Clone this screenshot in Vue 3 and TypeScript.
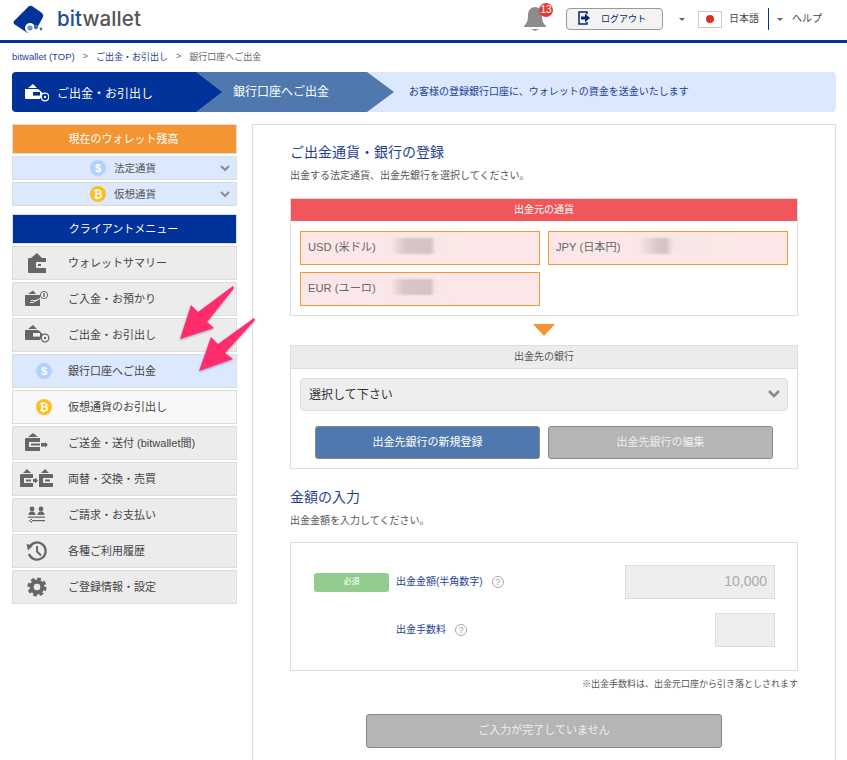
<template>
  <div class="page">
    <svg width="0" height="0" class="defs">
      <symbol id="wallet" viewBox="0 0 40 30">
        <path d="M13 10l6-5 5 5z" />
        <path d="M10 11a1 1 0 0 1 1-1h17v15H11a1 1 0 0 1-1-1z" />
        <rect x="18" y="14" width="10.500" height="6" class="hole" />
        <rect x="20" y="16" width="3" height="2" />
      </symbol>
      <symbol id="wallet-in" viewBox="0 0 40 30">
        <path d="M10 10l5-3.500 3 3.500z" />
        <path d="M7 11h15v3l-6 3 1 1 5-3v7H8a1 1 0 0 1-1-1z" />
        <path d="M13 16h6v1h-6zM12 18h4v1h-4z" class="hole-fill" />
        <circle cx="26" cy="11" r="3.600" fill="none" stroke="currentColor" stroke-width="1" />
        <path d="M25.300 9h1.400v4h-1.400z" />
      </symbol>
      <symbol id="wallet-out" viewBox="0 0 40 30">
        <path d="M10 9l5-4 4 4z" />
        <path d="M7 10h13v3h-6v5h8v2H8a1 1 0 0 1-1-1z" />
        <path d="M13 11.500 21 10.500l4 4-2 4.500h-9z" />
        <rect x="15" y="13" width="7" height="3.600" class="hole" />
        <circle cx="27" cy="18" r="3.800" class="hole" stroke="currentColor" stroke-width="1.300" />
        <circle cx="27" cy="18" r="1.200" />
      </symbol>
      <symbol id="wallet-send" viewBox="0 0 40 30">
        <path d="M10 9l5-4 5 4z" />
        <path d="M7 11a1 1 0 0 1 1-1h14v13H8a1 1 0 0 1-1-1z" />
        <rect x="11" y="14" width="12" height="5" class="hole" />
        <rect x="13" y="15.500" width="9" height="2" />
        <path d="M23 15h4v3.500h-4zM27 14l3 2.750-3 2.750z" />
      </symbol>
      <symbol id="wallet-swap" viewBox="0 0 40 30">
        <path d="M5 9l4-4 4 4zM23 9l4-4 4 4z" />
        <path d="M2 11a1 1 0 0 1 1-1h12v13H3a1 1 0 0 1-1-1zM21 10h13a1 1 0 0 1 1 1v11a1 1 0 0 1-1 1H21z" />
        <rect x="6" y="14" width="9" height="5" class="hole" />
        <rect x="25" y="14" width="10" height="5" class="hole" />
        <rect x="8" y="15.500" width="5" height="2" />
        <rect x="27" y="15.500" width="5" height="2" />
        <path d="M15 15h2v3h-2zM17 13.500l3 3-3 3z" />
      </symbol>
      <symbol id="people" viewBox="0 0 40 30">
        <circle cx="14" cy="9" r="2.400" />
        <circle cx="23" cy="9" r="2.400" />
        <path d="M10.500 15q0-3.500 3.500-3.500t3.500 3.500zM19.500 15q0-3.500 3.500-3.500t3.500 3.500z" />
        <path d="M10 16.500h17v1.300H10zM12 20h15v1.300H12zM14 18.500l-3.500 2.200 3.500 2.300z" />
      </symbol>
      <symbol id="history" viewBox="0 0 40 30">
        <path d="M11.500 11a8.600 8.600 0 1 1-.5 7" fill="none" stroke="currentColor" stroke-width="2.200" />
        <path d="M8.500 8l6.500 1.500-5 5z" />
        <path d="M19 10v5.500l4 4" fill="none" stroke="currentColor" stroke-width="1.900" />
      </symbol>
      <symbol id="gear" viewBox="0 0 40 30">
        <circle cx="19" cy="15" r="5.400" fill="none" stroke="currentColor" stroke-width="4.200" />
        <circle cx="19" cy="15" r="8.300" fill="none" stroke="currentColor" stroke-width="2.600" stroke-dasharray="3.800 2.717" />
      </symbol>
    </svg>

    <header class="top">
      <svg class="logo" width="32" height="30" viewBox="0 0 32 30">
        <path fill="#003399" d="M1 16 15 2q2-2 4-1l10 7q2 2 1 4l-6 11-8 4q-2 1-3 0L1 19q-1-2 0-3z" />
        <circle cx="17" cy="23" r="5" fill="#fff" />
        <circle cx="17" cy="23" r="2.600" fill="#6d95c6" />
        <circle cx="23" cy="22" r="2.200" fill="#3f70b0" />
        <circle cx="28" cy="24" r="1.400" fill="#3f70b0" />
      </svg>
      <div class="brand"><span>bit</span>wallet</div>

      <div class="bell">
        <svg width="24" height="25" viewBox="0 0 24 25">
          <path fill="#8c8c8c" d="M12 1a7 7 0 0 0-7 7c0 7-1 9-4 12v1h22v-1c-3-3-4-5-4-12a7 7 0 0 0-7-7z" />
          <path fill="#8c8c8c" d="M8 23h8l-4 2z" />
        </svg>
        <span class="bell-count">13</span>
      </div>
      <button class="logout">
        <svg width="12" height="14" viewBox="0 0 12 14">
          <path fill="none" stroke="#00287a" stroke-width="1.500" d="M9 3V1H1v12h8v-2" />
          <path fill="#00287a" d="M3 5.500h4V2.500L12 7 7 11.500V8.500H3z" />
        </svg>
        <span>ログアウト</span>
      </button>
      <i class="caret first"></i>
      <span class="flag"><b></b></span>
      <span class="lang">日本語</span>
      <span class="sep"></span>
      <i class="caret"></i>
      <span class="help">ヘルプ</span>
    </header>

    <nav class="crumbs">
      <a class="home">bitwallet (TOP)</a><em>&gt;</em><a>ご出金・お引出し</a><em>&gt;</em><span>銀行口座へご出金</span>
    </nav>

    <div class="steps">
      <div class="step one">
        <svg class="step-icon" width="26" height="20" viewBox="5 3 26 20"><use href="#wallet-out" width="40" height="30" /></svg>
        ご出金・お引出し
      </div>
      <div class="step two">銀行口座へご出金</div>
      <div class="step-note">お客様の登録銀行口座に、ウォレットの資金を送金いたします</div>
    </div>

    <div class="columns">
      <aside class="side">
        <div class="side-head orange">現在のウォレット残高</div>
        <div v-for="c in balances" :key="c.label" class="balance">
          <span class="coin" :class="c.kind">{{ c.mark }}</span>
          <span class="balance-label">{{ c.label }}</span>
          <svg class="chev" width="10" height="7" viewBox="0 0 10 7"><path d="M1 1l4 4 4-4" /></svg>
        </div>
        <div class="side-head navy">クライアントメニュー</div>
        <div v-for="m in menu" :key="m.label" class="item" :class="m.variant">
          <span class="item-icon">
            <span v-if="m.coin" class="coin" :class="m.coin">{{ m.coin === 'fiat' ? '$' : '₿' }}</span>
            <svg v-else width="40" height="30"><use :href="'#' + m.icon" /></svg>
          </span>
          <span class="item-label">{{ m.label }}</span>
        </div>
      </aside>

      <main class="main">
        <h2>ご出金通貨・銀行の登録</h2>
        <p class="lead">出金する法定通貨、出金先銀行を選択してください。</p>

        <section class="panel">
          <div class="panel-head red">出金元の通貨</div>
          <div class="cards">
            <div v-for="a in accounts" :key="a.label" class="card">
              <span class="card-label">{{ a.label }}</span>
              <span class="smudge" :style="{ width: a.blur + 'px', '--dark': a.dark + '%' }"></span>
            </div>
          </div>
        </section>

        <div class="tri"></div>

        <section class="panel">
          <div class="panel-head grey">出金先の銀行</div>
          <div class="select">
            選択して下さい
            <svg width="14" height="10" viewBox="0 0 14 10"><path d="M2 2l5 5 5-5" /></svg>
          </div>
          <div class="bank-btns">
            <button class="btn blue">出金先銀行の新規登録</button>
            <button class="btn off">出金先銀行の編集</button>
          </div>
        </section>

        <h2 class="second">金額の入力</h2>
        <p class="lead">出金金額を入力してください。</p>

        <section class="panel amount">
          <div class="row">
            <span class="must">必須</span>
            <label>出金金額(半角数字)</label>
            <span class="help-q">?</span>
            <input class="field wide" disabled value="10,000" />
          </div>
          <div class="row">
            <span class="must ghost"></span>
            <label>出金手数料</label>
            <span class="help-q">?</span>
            <input class="field narrow" disabled />
          </div>
        </section>
        <p class="note">※出金手数料は、出金元口座から引き落としされます</p>
        <button class="btn off submit">ご入力が完了していません</button>
      </main>
    </div>

    <svg class="arrows" width="80" height="95" viewBox="178 284 80 95">
      <g fill="#ff2d6b">
        <path d="M233 286 198 312 191 305 180 339 214 328 207 322 234 288z" />
        <path d="M254 318 218 344 211 337 199 371 233 359 225 353 255 320z" />
      </g>
    </svg>
  </div>
</template>

<script setup lang="ts">
interface MenuItem {
  label: string;
  icon?: string;
  coin?: string;
  variant?: string;
}

const balances = [
  { label: '法定通貨', kind: 'fiat', mark: '$' },
  { label: '仮想通貨', kind: 'crypto', mark: '₿' },
];

const menu: MenuItem[] = [
  { label: 'ウォレットサマリー', icon: 'wallet' },
  { label: 'ご入金・お預かり', icon: 'wallet-in' },
  { label: 'ご出金・お引出し', icon: 'wallet-out' },
  { label: '銀行口座へご出金', coin: 'fiat', variant: 'active' },
  { label: '仮想通貨のお引出し', coin: 'crypto', variant: 'sub' },
  { label: 'ご送金・送付 (bitwallet間)', icon: 'wallet-send' },
  { label: '両替・交換・売買', icon: 'wallet-swap' },
  { label: 'ご請求・お支払い', icon: 'people' },
  { label: '各種ご利用履歴', icon: 'history' },
  { label: 'ご登録情報・設定', icon: 'gear' },
];

const accounts = [
  { label: 'USD (米ドル)', blur: 66, dark: 58 },
  { label: 'JPY (日本円)', blur: 92, dark: 28 },
  { label: 'EUR (ユーロ)', blur: 58, dark: 66 },
];
</script>

<style>
html, body {
  margin: 0;
  background: #fff;
  overflow: hidden;
}

.hole {
  fill: var(--hole, #ececec);
}

.hole-fill {
  fill: var(--hole, #ececec);
}
</style>

<style scoped>
.page {
  position: relative;
  height: 760px;
  overflow: hidden;
  font-family: "Liberation Sans", "Noto Sans CJK JP", sans-serif;
  color: #444;
}

.defs {
  position: absolute;
}

.top {
  display: flex;
  align-items: center;
  height: 40px;
  padding-left: 13px;
  border-bottom: 3px solid #00329a;
  box-sizing: content-box;
}

.brand {
  margin-left: 12px;
  font-family: Inter, sans-serif;
  font-size: 20.500px;
  font-weight: 500;
  letter-spacing: 0.1px;
  color: #555;
  margin-top: -3px;
}

.brand span {
  color: #1d4c9c;
}

.bell {
  position: relative;
  display: flex;
  margin-left: auto;
  margin-top: -3px;
}

.bell-count {
  position: absolute;
  top: -3px;
  right: -6px;
  width: 14px;
  height: 14px;
  border-radius: 50%;
  background: #e23b32;
  color: #fff;
  font-size: 10px;
  line-height: 14px;
  text-align: center;
}

.logout {
  display: flex;
  align-items: center;
  width: 97px;
  height: 22px;
  margin: -2px 0 0 19px;
  padding: 0 0 2px 11px;
  border: 1px solid #999;
  border-radius: 4px;
  background: #f3f3f3;
  font: inherit;
  font-size: 9px;
  color: #00287a;
}

.logout span {
  margin-left: 11px;
}

.caret {
  width: 0;
  height: 0;
  margin: -2px 0 0 8px;
  border: 3px solid transparent;
  border-top: 3px solid #666;
  border-bottom: 0;
}

.caret.first {
  margin-left: 16px;
}

.flag {
  display: flex;
  align-items: center;
  justify-content: center;
  width: 22px;
  height: 15px;
  margin: -2px 0 0 13px;
  border: 1px solid #ccc;
  background: #fff;
}

.flag b {
  width: 8px;
  height: 8px;
  border-radius: 50%;
  background: #d8321e;
}

.lang,
.help {
  font-size: 10px;
  margin-top: -5px;
}

.lang {
  margin-left: 7px;
}

.sep {
  width: 1px;
  height: 22px;
  margin: -2px 0 0 9px;
  background: #00329a;
}

.help {
  margin: -5px 25px 0 9px;
}

.crumbs {
  display: flex;
  align-items: center;
  height: 14px;
  margin: 6px 0 0 12px;
  font-size: 9px;
  color: #666;
}

.crumbs a {
  color: #1f3f95;
}

.crumbs .home {
  font-size: 9.500px;
}

.crumbs em {
  margin: 0 8px;
  font-style: normal;
}

.steps {
  display: flex;
  align-items: center;
  height: 40px;
  margin: 9px 11px 0 12px;
  border-radius: 4px;
  background: #dce8fd;
  overflow: hidden;
}

.step {
  display: flex;
  align-items: center;
  height: 40px;
  color: #fff;
  font-size: 12px;
}

.step.one {
  position: relative;
  z-index: 2;
  width: 210px;
  padding-left: 11px;
  box-sizing: border-box;
  background: #00329a;
  clip-path: polygon(0 0, 184px 0, 100% 50%, 184px 100%, 0 100%);
  --hole: #00329a;
}

.step-icon {
  margin-right: 8px;
  fill: #fff;
  color: #fff;
  flex: none;
}

.step.two {
  z-index: 1;
  width: 199px;
  margin-left: -27px;
  padding: 0 0 3px 38px;
  box-sizing: border-box;
  background: #4f79ae;
  clip-path: polygon(0 0, 172px 0, 100% 50%, 172px 100%, 0 100%);
}

.step-note {
  margin-left: 15px;
  padding-bottom: 3px;
  font-size: 10px;
  color: #1f3f95;
}

.columns {
  display: flex;
  gap: 15px;
  margin: 12px 11px 0 12px;
}

.side {
  display: flex;
  flex-direction: column;
  gap: 2px;
  flex: none;
  width: 225px;
}

.side-head {
  display: flex;
  align-items: center;
  justify-content: center;
  height: 30px;
  padding: 0 2px 3px 0;
  border: 1px solid #ddd;
  box-sizing: border-box;
  color: #fff;
  font-size: 11px;
}

.orange {
  background: #f39530;
}

.navy {
  margin-top: 6px;
  background: #00329a;
}

.balance {
  display: flex;
  align-items: center;
  height: 24px;
  border: 1px solid #ddd;
  box-sizing: border-box;
  background: #dce8fd;
  font-size: 10.500px;
  color: #555;
  padding-left: 77px;
}

.balance-label {
  margin: 0 0 2px 8px;
}

.chev {
  margin-left: auto;
  margin-right: 6px;
  fill: none;
  stroke: #8d8d8d;
  stroke-width: 2;
}

.coin {
  display: flex;
  align-items: center;
  justify-content: center;
  width: 16px;
  height: 16px;
  border-radius: 50%;
  color: #fff;
  font-size: 11px;
  font-weight: 700;
}

.coin.fiat {
  background: #b3d2fb;
}

.coin.crypto {
  background: #fbbf24;
}

.item {
  display: flex;
  align-items: center;
  height: 34px;
  border: 1px solid #ddd;
  box-sizing: border-box;
  background: #ececec;
  font-size: 11px;
  color: #444;
}

.item-label {
  margin-bottom: 3px;
}

.item.active {
  background: #dce8fd;
}

.item.sub {
  background: #f8f8f8;
}

.item-icon {
  display: flex;
  align-items: center;
  justify-content: center;
  flex: none;
  width: 50px;
  margin-right: 5px;
  color: #666;
  fill: #666;
}

.item-icon .coin {
  margin-left: 12px;
}

.main {
  flex: 1;
  padding: 17px 37px 0;
  border: 1px solid #ddd;
  height: 700px;
  box-sizing: border-box;
}

h2 {
  margin: 0;
  font-size: 14px;
  font-weight: 400;
  line-height: 20px;
  color: #1f3f95;
}

h2.second {
  margin-top: 18px;
}

.lead {
  margin: 7px 0 0;
  font-size: 10px;
  line-height: 14px;
  color: #555;
}

.panel {
  margin-top: 15px;
  border: 1px solid #ddd;
  box-sizing: border-box;
}

.tri + .panel {
  margin-top: 9px;
}

.panel-head {
  display: flex;
  align-items: center;
  justify-content: center;
  height: 22px;
  padding-bottom: 3px;
  box-sizing: border-box;
  font-size: 10px;
}

.panel-head.red {
  background: #f1565a;
  color: #fff;
}

.panel-head.grey {
  height: 23px;
  background: #ececec;
  color: #555;
  border-bottom: 1px solid #ddd;
}

.cards {
  display: grid;
  grid-template-columns: 240px 240px;
  gap: 7px 8px;
  padding: 10px 9px 9px;
}

.card {
  display: flex;
  align-items: center;
  height: 34px;
  padding: 0 0 5px 7px;
  border: 1px solid #f39530;
  box-sizing: border-box;
  background: #fbe7e7;
  font-size: 11.200px;
  color: #666;
}

.card-label {
  width: 84px;
}

.smudge {
  height: 16px;
  background: linear-gradient(90deg, #f5e4e4, #d8c6c8 20%, #d3c1c3 var(--dark), #f7e6e6 calc(var(--dark) + 8%), #fbe9e8);
  filter: blur(1px);
}

.tri {
  width: 0;
  height: 0;
  margin: 8px auto 0;
  border-left: 11px solid transparent;
  border-right: 11px solid transparent;
  border-top: 12px solid #f39530;
}

.select {
  display: flex;
  align-items: center;
  justify-content: space-between;
  height: 33px;
  margin: 9px 9px 0;
  padding: 0 6px 2px 8px;
  border: 1px solid #ddd;
  border-radius: 4px;
  box-sizing: border-box;
  background: #eee;
  font-size: 12px;
  color: #333;
}

.select svg {
  fill: none;
  stroke: #888;
  stroke-width: 2.500;
}

.bank-btns {
  display: flex;
  justify-content: center;
  gap: 8px;
  margin: 15px 0 9px;
}

.btn {
  height: 33px;
  padding: 0 0 4px;
  border: 1px solid #888;
  border-radius: 3px;
  box-sizing: border-box;
  font: inherit;
  font-size: 11px;
  color: #fff;
}

.bank-btns .btn {
  width: 225px;
}

.btn.blue {
  background: #4f79ae;
}

.btn.off {
  background: #b5b5b5;
  color: #eee;
}

.amount {
  margin-top: 14px;
  padding: 22px 22px 23px 23px;
}

.row {
  display: flex;
  align-items: center;
  height: 34px;
}

.row + .row {
  margin-top: 14px;
}

.must {
  display: flex;
  align-items: center;
  justify-content: center;
  flex: none;
  width: 75px;
  height: 19px;
  margin-right: 7px;
  padding-bottom: 3px;
  box-sizing: border-box;
  border-radius: 3px;
  background: #93cc8e;
  color: #fff;
  font-size: 8px;
}

.must.ghost {
  visibility: hidden;
}

label {
  margin-bottom: 4px;
  font-size: 10px;
  color: #1f3f95;
}

.help-q {
  display: flex;
  align-items: center;
  justify-content: center;
  width: 10px;
  height: 10px;
  margin: 0 0 0 9px;
  border: 1px solid #aaa;
  border-radius: 50%;
  font-size: 9px;
  color: #999;
}

.field {
  height: 34px;
  margin-left: auto;
  padding: 0 7px 3px;
  border: 1px solid #ddd;
  box-sizing: border-box;
  background: #eee;
  font: inherit;
  font-size: 14px;
  color: #aaa;
  text-align: right;
}

.field.wide {
  width: 150px;
}

.field.narrow {
  width: 60px;
}

.note {
  margin: 6px 0 0;
  font-size: 9px;
  line-height: 14px;
  color: #555;
  text-align: right;
}

.submit {
  display: block;
  width: 356px;
  height: 34px;
  margin: 23px auto 0;
}

.arrows {
  position: absolute;
  left: 178px;
  top: 284px;
  filter: drop-shadow(0 1px 1px rgba(60, 60, 90, .45));
}
</style>
